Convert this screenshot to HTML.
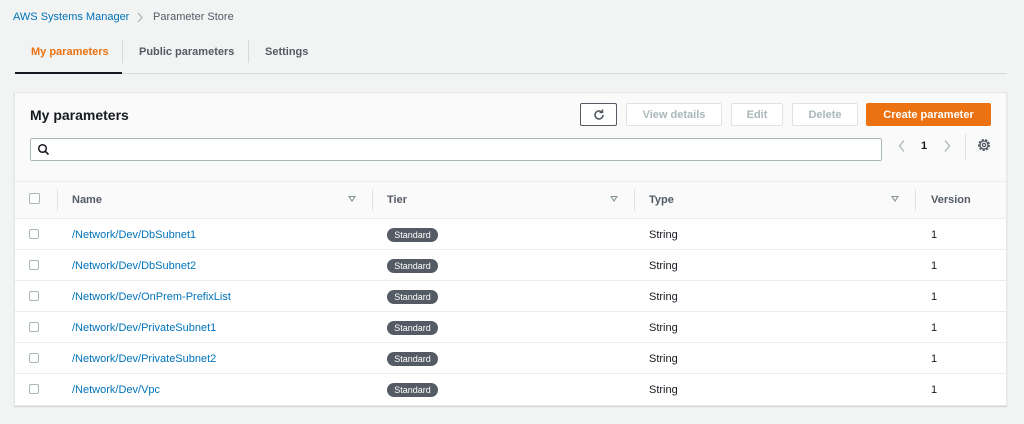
<!DOCTYPE html>
<html><head><style>
*{box-sizing:border-box;margin:0;padding:0}
body{width:1024px;height:424px;background:#f2f3f3;font-family:"Liberation Sans",sans-serif;font-size:11px;color:#16191f;position:relative;overflow:hidden}
.a{position:absolute}
.b{font-weight:bold}
.btn{position:absolute;top:103px;height:23px;border:1px solid #e0e3e3;background:#fff;color:#aab7b8;font-weight:bold;font-size:11px;text-align:center;line-height:23px;border-radius:2px}
.hdr{position:absolute;top:194px;font-weight:bold;color:#545b64}
.vd{position:absolute;width:1px;background:#dfe3e3}
.row{position:absolute;left:15px;width:991px;height:31px;border-top:1px solid #eaeded}
.cb{position:absolute;left:14px;top:10px;width:10px;height:10px;border:1px solid #aab7b8;border-radius:2px;background:#fff}
.nm{position:absolute;left:57px;top:10px;color:#0073bb}
.tag{position:absolute;left:372px;top:9px;height:14px;width:51px;background:#545b64;color:#fff;border-radius:7px;font-size:9px;line-height:14px;text-align:center}
.ty{position:absolute;left:634px;top:10px}
.ve{position:absolute;left:916px;top:10px}
.tri{position:absolute;top:196px;width:0;height:0;border-left:4px solid transparent;border-right:4px solid transparent;border-top:6px solid #879596}
.tri:after{content:"";position:absolute;left:-2px;top:-5px;border-left:2px solid transparent;border-right:2px solid transparent;border-top:3px solid #fff}
</style></head><body>
<div class="a" style="left:13px;top:11px;color:#0073bb">AWS Systems Manager</div>
<svg class="a" style="left:136px;top:12px" width="8" height="11" viewBox="0 0 8 11"><path d="M2 1l4 4.5L2 10" fill="none" stroke="#aab7b8" stroke-width="1.2"/></svg>
<div class="a" style="left:153px;top:11px;color:#545b64">Parameter Store</div>
<div class="a b" style="left:31px;top:46px;color:#ec7211">My parameters</div>
<div class="a b" style="left:139px;top:46px;color:#545b64">Public parameters</div>
<div class="a b" style="left:265px;top:46px;color:#545b64">Settings</div>
<div class="vd" style="left:122px;top:40px;height:23px;background:#d5dbdb"></div>
<div class="vd" style="left:248px;top:40px;height:23px;background:#d5dbdb"></div>
<div class="a" style="left:15px;top:73px;width:992px;height:1px;background:#d5dbdb"></div>
<div class="a" style="left:15px;top:72px;width:107px;height:2px;background:#16191f"></div>

<div class="a" style="left:14px;top:92px;width:993px;height:314px;background:#fff;border:1px solid #e6e8e8;box-shadow:0 1px 1px rgba(0,0,0,.15)"></div>
<div class="a" style="left:15px;top:93px;width:991px;height:88px;background:#fafafa"></div>
<div class="a b" style="left:30px;top:107px;font-size:14px">My parameters</div>
<div class="btn" style="left:580px;width:37px;border-color:#545b64;color:#545b64">
<svg width="14" height="14" viewBox="0 0 14 14" style="margin-top:4px"><path d="M11 7a4 4 0 1 1-1.2-2.9" fill="none" stroke="#545b64" stroke-width="1.6"/><path d="M10.5 1.5v3h-3" fill="none" stroke="#545b64" stroke-width="1.6"/></svg></div>
<div class="btn" style="left:626px;width:96px">View details</div>
<div class="btn" style="left:731px;width:52px">Edit</div>
<div class="btn" style="left:792px;width:66px">Delete</div>
<div class="btn" style="left:866px;width:125px;background:#ec7211;border-color:#ec7211;color:#fff">Create parameter</div>
<div class="a" style="left:30px;top:138px;width:852px;height:23px;border:1px solid #aab7b8;border-radius:2px;background:#fff"></div>
<svg class="a" style="left:37px;top:143px" width="13" height="13" viewBox="0 0 13 13"><circle cx="5.5" cy="5.5" r="3.8" fill="none" stroke="#16191f" stroke-width="1.5"/><path d="M8.3 8.3l3.2 3.2" stroke="#16191f" stroke-width="1.6"/></svg>
<svg class="a" style="left:897px;top:139px" width="10" height="14" viewBox="0 0 10 14"><path d="M7 1.5L2.5 7 7 12.5" fill="none" stroke="#aab7b8" stroke-width="1.3"/></svg>
<div class="a b" style="left:921px;top:140px">1</div>
<svg class="a" style="left:942px;top:139px" width="10" height="14" viewBox="0 0 10 14"><path d="M3 1.5L7.5 7 3 12.5" fill="none" stroke="#aab7b8" stroke-width="1.3"/></svg>
<div class="vd" style="left:965px;top:134px;height:26px"></div>
<svg class="a" style="left:977px;top:138px" width="14" height="14" viewBox="0 0 14 14"><circle cx="7" cy="7" r="5" fill="none" stroke="#545b64" stroke-width="2" stroke-dasharray="2.2 1.3"/><circle cx="7" cy="7" r="4" fill="none" stroke="#545b64" stroke-width="1.3"/><circle cx="7" cy="7" r="1.6" fill="none" stroke="#545b64" stroke-width="1.3"/></svg>

<div class="a" style="left:15px;top:181px;width:991px;height:37px;background:#fafafa;border-top:1px solid #eaeded"></div>
<div class="a" style="left:29px;top:193px;width:11px;height:11px;border:1px solid #aab7b8;border-radius:2px;background:#fff"></div>
<div class="vd" style="left:57px;top:189px;height:22px"></div>
<div class="vd" style="left:372px;top:189px;height:22px"></div>
<div class="vd" style="left:634px;top:189px;height:22px"></div>
<div class="vd" style="left:915px;top:189px;height:22px"></div>
<div class="hdr" style="left:72px">Name</div>
<div class="hdr" style="left:387px">Tier</div>
<div class="hdr" style="left:649px">Type</div>
<div class="hdr" style="left:931px">Version</div>
<div class="tri" style="left:348px"></div>
<div class="tri" style="left:610px"></div>
<div class="tri" style="left:891px"></div>

<div class="row" style="top:218px"><div class="cb"></div><div class="nm">/Network/Dev/DbSubnet1</div><div class="tag">Standard</div><div class="ty">String</div><div class="ve">1</div></div>
<div class="row" style="top:249px"><div class="cb"></div><div class="nm">/Network/Dev/DbSubnet2</div><div class="tag">Standard</div><div class="ty">String</div><div class="ve">1</div></div>
<div class="row" style="top:280px"><div class="cb"></div><div class="nm">/Network/Dev/OnPrem-PrefixList</div><div class="tag">Standard</div><div class="ty">String</div><div class="ve">1</div></div>
<div class="row" style="top:311px"><div class="cb"></div><div class="nm">/Network/Dev/PrivateSubnet1</div><div class="tag">Standard</div><div class="ty">String</div><div class="ve">1</div></div>
<div class="row" style="top:342px"><div class="cb"></div><div class="nm">/Network/Dev/PrivateSubnet2</div><div class="tag">Standard</div><div class="ty">String</div><div class="ve">1</div></div>
<div class="row" style="top:373px"><div class="cb"></div><div class="nm">/Network/Dev/Vpc</div><div class="tag">Standard</div><div class="ty">String</div><div class="ve">1</div></div>
</body></html>
